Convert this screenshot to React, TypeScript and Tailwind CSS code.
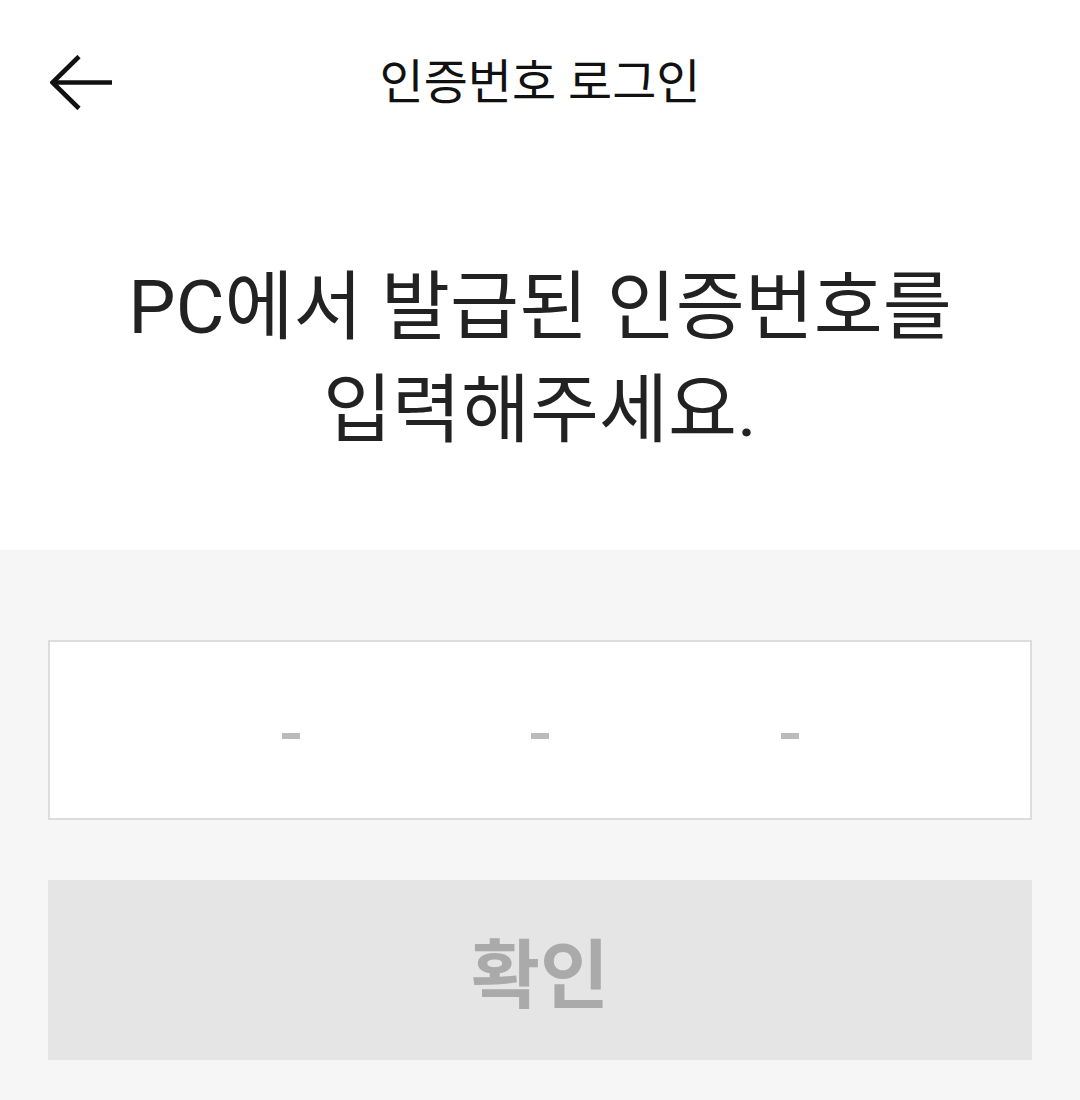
import React from "react";

export default function App() {
  const font = { fontFamily: "Roboto, 'Noto Sans CJK KR', sans-serif" };
  return (
    <div className="w-[1080px] h-[1100px] bg-white flex flex-col overflow-hidden" style={font}>
      <header className="relative h-[166px] flex items-center justify-center shrink-0">
        <button className="absolute left-[50px] top-[55px] w-[62px] h-[55px]">
          <svg width="62" height="55" viewBox="0 0 62 55" fill="none">
            <path d="M29 1.5 L2.5 27.5 L29 53.5" stroke="#111" strokeWidth="4.6" strokeLinecap="butt" strokeLinejoin="miter" />
            <path d="M3 27.5 H62" stroke="#111" strokeWidth="4.6" />
          </svg>
        </button>
        <h1 className="text-[48px] leading-none text-[#111] font-normal">인증번호 로그인</h1>
      </header>
      <section className="pt-[90px] pb-[88px] flex justify-center">
        <p className="text-[75px] leading-[103px] text-[#222] text-center whitespace-nowrap">
          PC에서 발급된 인증번호를
          <br />
          입력해주세요.
        </p>
      </section>
      <section className="flex-1 bg-[#f6f6f6] px-[48px] pt-[90px] flex flex-col gap-[60px]">
        <div className="h-[180px] bg-white border-2 border-[#dcdcdc] flex items-center">
          <div className="flex-1" />
          <div className="w-[18px] h-[6px] mt-[12px] bg-[#bbbbbb]" />
          <div className="flex-1" />
          <div className="w-[18px] h-[6px] mt-[12px] bg-[#bbbbbb]" />
          <div className="flex-1" />
          <div className="w-[18px] h-[6px] mt-[12px] bg-[#bbbbbb]" />
          <div className="flex-1" />
        </div>
        <button className="h-[180px] bg-[#e5e5e5] flex items-center justify-center pt-[12px] text-[75px] font-bold text-[#aaaaaa] leading-none">
          확인
        </button>
      </section>
    </div>
  );
}
